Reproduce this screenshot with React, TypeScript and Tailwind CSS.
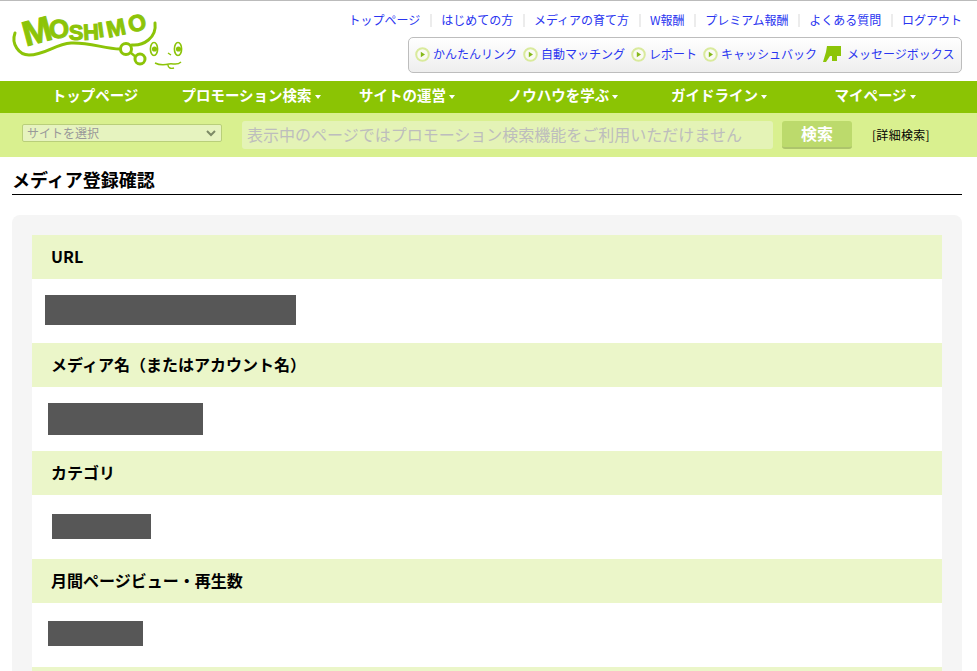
const topLinks = ['トップページ', 'はじめての方', 'メディアの育て方', 'W報酬', 'プレミアム報酬', 'よくある質問', 'ログアウト'];
const subLinks = ['かんたんリンク', '自動マッチング', 'レポート', 'キャッシュバック'];

const navItems = [
  { label: 'トップページ', arrow: false },
  { label: 'プロモーション検索', arrow: true },
  { label: 'サイトの運営', arrow: true },
  { label: 'ノウハウを学ぶ', arrow: true },
  { label: 'ガイドライン', arrow: true },
  { label: 'マイページ', arrow: true },
];

const logoLetters = [
  { ch: 'M', x: 26, y: 17, size: 35, rot: -15 },
  { ch: 'O', x: 48, y: 15, size: 26, rot: -5 },
  { ch: 'S', x: 65, y: 18, size: 22, rot: 0 },
  { ch: 'H', x: 80, y: 18, size: 22, rot: -3 },
  { ch: 'I', x: 90, y: 16, size: 21, rot: -8 },
  { ch: 'M', x: 105, y: 14, size: 23, rot: -12 },
  { ch: 'O', x: 126, y: 9, size: 23, rot: -15 },
];

const Logo = () => (
  <svg width="176" height="60" viewBox="0 0 176 60" className="block overflow-visible">
    <g fill="#8cc408" stroke="#8cc408" strokeWidth="1" fontFamily="'Liberation Sans', sans-serif" fontWeight="700">
      {logoLetters.map((l, i) => (
        <text key={i} y={l.size * 0.345} fontSize={l.size} textAnchor="middle" transform={`translate(${l.x},${l.y}) rotate(${l.rot})`}>
          {l.ch}
        </text>
      ))}
    </g>
    <g fill="none" stroke="#8cc408">
      <path d="M4 19 C0 30 8 41 18 41 C34 41 44 30 60 29 C78 28 94 35 109 35" strokeWidth="3" strokeLinecap="round" />
      <circle cx="115" cy="35" r="5.5" strokeWidth="3" />
      <path d="M121 31 C132 32 146 24 144 9" strokeWidth="3" strokeLinecap="round" />
      <path d="M120 39 L125 43" strokeWidth="2.5" />
      <circle cx="129" cy="45" r="5" strokeWidth="3" />
      <ellipse cx="143" cy="35" rx="3.6" ry="6.5" strokeWidth="1.6" />
      <ellipse cx="167" cy="35" rx="3.6" ry="6.5" strokeWidth="1.6" />
      <path d="M144 49 C150 52 154 51 158 50 C162 49 166 52 170 48 M157 51 C157 54 160 55 163 54 M157 39 L160 41" strokeWidth="1.4" />
    </g>
    <circle cx="143.5" cy="35" r="2.6" fill="#8cc408" />
    <circle cx="167.5" cy="35" r="2.6" fill="#8cc408" />
  </svg>
);

const PlayIcon = () => (
  <svg width="15" height="15" viewBox="0 0 15 15" className="shrink-0">
    <circle cx="7.5" cy="7.5" r="6.3" fill="#fafaf4" stroke="#d9ea9c" strokeWidth="2" />
    <path d="M5.8 4.8 L10 7.5 L5.8 10.2 Z" fill="#86b81a" />
  </svg>
);

const ThumbIcon = () => (
  <svg width="18" height="17" viewBox="0 0 18 17" className="shrink-0">
    <path d="M4 0 H18 V10 H14 V15 H9 V10 H7 L3 16 H0 L3 6 Z" fill="#8cc408" />
  </svg>
);

const NavArrow = () => (
  <svg width="6" height="4" viewBox="0 0 6 4" className="ml-[3px] mt-[2px]">
    <path d="M0 0 H6 L3 4 Z" fill="#ffffff" />
  </svg>
);

const Field = ({ label, inset, width, height }: { label: string; inset: string; width: string; height: string }) => (
  <>
    <div className="flex h-11 items-center bg-[#ebf6c9] pb-[3px] pl-[19px] text-base font-bold leading-none text-black">{label}</div>
    <div className={`h-16 bg-white ${inset}`}>
      <div className={`bg-[#575757] ${width} ${height}`} />
    </div>
  </>
);

export default function App() {
  return (
    <div className="h-[671px] w-[977px] overflow-hidden bg-white font-['Noto_Sans_CJK_JP','Liberation_Sans',sans-serif]">
      <header className="relative h-[81px] border-t border-[#bbbbbb]">
        <div className="absolute left-[11px] top-[13px]">
          <Logo />
        </div>
        <div className="flex flex-col items-end pr-[15px] pt-[11px]">
          <nav className="flex h-[16px] items-center text-xs leading-none text-[#2a35f0]">
            {topLinks.map((link, i) => (
              <span key={link} className="flex items-center">
                {i > 0 && <span className="mx-[9.4px] h-[13px] w-[2px] bg-[#ececec]" />}
                <span>{link}</span>
              </span>
            ))}
          </nav>
          <div className="mt-[9px] flex h-[36px] w-[554px] items-center rounded-[5px] border border-[#bdbdbd] bg-gradient-to-b from-white to-[#eeeeee] pb-[2px] pl-[6px] text-xs leading-none text-[#2a35f0]">
            {subLinks.map((link) => (
              <span key={link} className="mr-[6px] flex items-center gap-[3px]">
                <PlayIcon />
                {link}
              </span>
            ))}
            <span className="flex items-center gap-[6px]">
              <ThumbIcon />
              メッセージボックス
            </span>
          </div>
        </div>
      </header>

      <nav className="flex h-8 items-center bg-[#8bc404] pb-[3px] pl-[17px] text-[14.5px] font-bold leading-none text-white">
        {navItems.map((item) => (
          <div key={item.label} className="flex w-[156px] items-center justify-center">
            {item.label}
            {item.arrow && <NavArrow />}
          </div>
        ))}
      </nav>

      <div className="flex h-11 items-center bg-[#d9f08f] pl-[22px]">
        <div className="mb-[4px] flex h-[18px] w-[200px] items-center justify-between rounded-[2px] border border-[#b9cf7a] bg-[#e6f3bf] pl-[4px] pr-[5px] text-xs leading-none text-[#999999]">
          サイトを選択
          <svg width="10" height="7" viewBox="0 0 10 7">
            <path d="M1 1 L5 5 L9 1" fill="none" stroke="#7d8a66" strokeWidth="2" />
          </svg>
        </div>
        <div className="ml-[20px] flex h-7 w-[531px] items-center rounded-[3px] bg-[#e4f3b6] pb-[3px] pl-[5px] text-base leading-none text-[#bdbdbd]">
          表示中のページではプロモーション検索機能をご利用いただけません
        </div>
        <div className="ml-[9px] flex h-7 w-[70px] items-center justify-center rounded-[3px] border-b-2 border-[#adc46c] bg-[#bcda6c] pb-[2px] text-base font-bold leading-none text-white">
          検索
        </div>
        <span className="ml-5 text-xs leading-none tracking-[0.3px] text-black">[詳細検索]</span>
      </div>

      <main className="pl-3 pr-[15px]">
        <h1 className="flex h-[38px] items-end border-b border-black pb-[6px] text-lg font-bold leading-none text-black">
          メディア登録確認
        </h1>
        <div className="mt-5 rounded-lg bg-[#f5f5f5] p-5">
          <Field label="URL" inset="pl-[13px] pt-4" width="w-[251px]" height="h-[30px]" />
          <Field label="メディア名（またはアカウント名）" inset="pl-4 pt-4" width="w-[155px]" height="h-8" />
          <Field label="カテゴリ" inset="pl-5 pt-[19px]" width="w-[99px]" height="h-[25px]" />
          <Field label="月間ページビュー・再生数" inset="pl-4 pt-[18px]" width="w-[95px]" height="h-[25px]" />
          <div className="h-11 bg-[#ebf6c9]" />
        </div>
      </main>
    </div>
  );
}
